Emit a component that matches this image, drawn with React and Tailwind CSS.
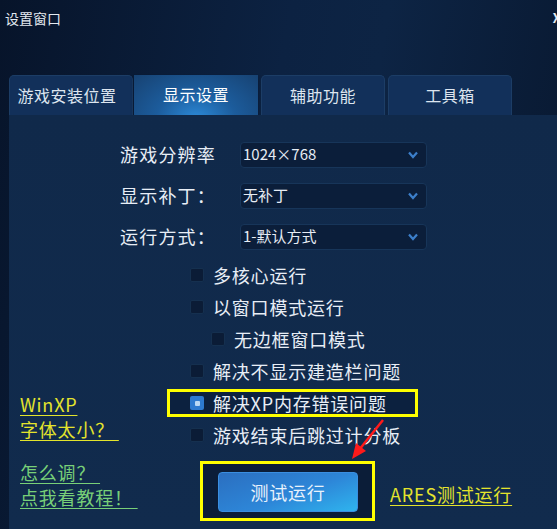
const font = "font-['Noto_Sans_CJK_SC','Noto_Sans',sans-serif]";

function Select({ value }) {
  return (
    <div className="flex h-[26px] w-[187px] items-center justify-between rounded-[4px] border border-[#173559] bg-[#0b1e3a] pl-[2px] pr-[8px] text-[15px] tracking-normal text-[#e6ecf4]">
      <span>{value}</span>
      <svg width="10" height="8" viewBox="0 0 10 8">
        <polyline points="1,1.5 5,6 9,1.5" fill="none" stroke="#3c7fca" strokeWidth="2.2" />
      </svg>
    </div>
  );
}

function Box({ checked }) {
  if (checked) {
    return (
      <div className="flex h-[14px] w-[14px] items-center justify-center rounded-[2px] bg-[#2d7ad0]">
        <div className="h-[5px] w-[5px] rounded-[1px] bg-[#b9d8f6]" />
      </div>
    );
  }
  return <div className="h-[14px] w-[14px] rounded-[2px] border border-[#15304f] bg-[#0b1c36]" />;
}

function Check({ label, indent }) {
  return (
    <div className={`flex h-[32px] items-center gap-[9px] ${indent ? 'pl-[44px]' : 'pl-[23px]'}`}>
      <Box />
      <span>{label}</span>
    </div>
  );
}

export default function App() {
  const tabs = ['游戏安装位置', '显示设置', '辅助功能', '工具箱'];

  return (
    <div className={`relative flex h-[529px] w-[557px] flex-col overflow-hidden bg-[linear-gradient(100deg,#07142a_0%,#0c2242_45%,#0d2444_60%,#08172e_100%)] text-[#e8eef6] ${font}`}>
      {/* title bar */}
      <div className="flex h-[40px] items-start justify-between pl-[5px] pt-[8px] text-[14px] leading-[20px] text-[#e4e9f0]">
        <span>设置窗口</span>
        <span className="mr-[-4px] text-[13px] font-bold">X</span>
      </div>

      {/* tabs */}
      <div className="mt-[35px] flex h-[40px] pl-[9px] text-[16px] tracking-[0.5px]">
        {tabs.map((t, i) =>
          i === 1 ? (
            <div
              key={t}
              className="ml-[1px] flex w-[124px] items-center justify-center bg-[radial-gradient(ellipse_at_50%_110%,#2c8ad8_0%,#1c5c9c_45%,#174272_100%)] pb-[2px] text-white shadow-[0_3px_3px_#081a33]"
            >
              {t}
            </div>
          ) : (
            <div
              key={t}
              className={`flex w-[124px] items-center justify-center rounded-t-[5px] border-x border-t border-[#1c3d66] bg-[#12305a] pb-[2px] text-[#dde5ef] ${i > 1 ? 'ml-[3px]' : ''} ${i === 0 ? 'pr-[8px]' : ''}`}
            >
              {t}
            </div>
          )
        )}
      </div>

      {/* panel */}
      <div className="ml-[9px] flex flex-1 flex-col bg-[linear-gradient(180deg,#10294a_0%,#112b4d_100%)] text-[18px] tracking-[0.8px]">
        <div className="flex flex-col gap-[14px] pl-[111px] pt-[26px]">
          <div className="flex items-center">
            <span className="w-[120px] tracking-[1.2px]">游戏分辨率</span>
            <Select value="1024×768" />
          </div>
          <div className="flex items-center">
            <span className="w-[120px] tracking-[1.2px]">显示补丁：</span>
            <Select value="无补丁" />
          </div>
          <div className="flex items-center">
            <span className="w-[120px] tracking-[1.2px]">运行方式：</span>
            <Select value="1-默认方式" />
          </div>
        </div>

        <div className="mt-[9px] flex">
          {/* left links */}
          <div className="flex w-[158px] flex-col pl-[11px] pt-[133px] text-[18px] leading-[25px]">
            <span className="w-fit text-[#e4e42c] underline underline-offset-[3px]">WinXP</span>
            <span className="w-fit text-[#e4e42c] underline underline-offset-[3px]">字体太小？&nbsp;</span>
            <span className="mt-[18px] w-fit text-[#78d078] underline underline-offset-[3px]">怎么调？&nbsp;</span>
            <span className="w-fit text-[#78d078] underline underline-offset-[3px]">点我看教程！&nbsp;</span>
          </div>

          {/* checkbox column */}
          <div className="flex flex-col">
            <Check label="多核心运行" />
            <Check label="以窗口模式运行" />
            <Check label="无边框窗口模式" indent />
            <Check label="解决不显示建造栏问题" />
            <div className="flex h-[32px] items-center">
              <div className="flex h-[28px] w-[251px] items-center gap-[9px] border-[3px] border-[#ffff00] bg-[#0c213f] pl-[20px]">
                <Box checked />
                <span>解决XP内存错误问题</span>
              </div>
            </div>
            <Check label="游戏结束后跳过计分板" />

            <div className="mt-[10px] flex items-center">
              <div className="ml-[33px] flex h-[60px] w-[175px] border-[3px] border-[#ffff00] bg-[#0b1d38] pl-[15px] pt-[8px]">
                <div className="flex h-[40px] w-[140px] items-center justify-center rounded-[4px] border border-[#3a8ee0] bg-[linear-gradient(160deg,#2b6fc0_0%,#2d86d8_55%,#2fb4ee_100%)] text-[18px] text-[#e8f2fc]">
                  测试运行
                </div>
              </div>
              <span className="ml-[15px] mt-[6px] text-[#e4e42c] underline underline-offset-[3px]">ARES测试运行</span>
            </div>
          </div>
        </div>
      </div>

      {/* red arrow */}
      <svg className="absolute left-[345px] top-[415px]" width="45" height="50" viewBox="0 0 45 50">
        <line x1="38" y1="5" x2="14" y2="35" stroke="#ff1a1a" strokeWidth="2.5" />
        <polygon points="7,44 11,28 21,36" fill="#ff1a1a" />
      </svg>
    </div>
  );
}
